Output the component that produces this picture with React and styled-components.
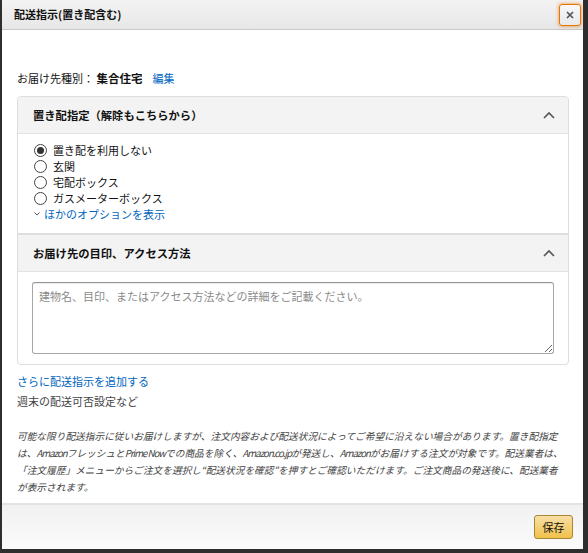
import React, { useState } from 'react';
import styled, { createGlobalStyle } from 'styled-components';

const FONT = `"Noto Sans CJK JP", "Noto Sans", sans-serif`;

const OPTIONS = [
  { id: 'none', label: '置き配を利用しない' },
  { id: 'door', label: '玄関' },
  { id: 'box', label: '宅配ボックス' },
  { id: 'gas', label: 'ガスメーターボックス' },
];

const GlobalStyle = createGlobalStyle`
  html, body {
    margin: 0;
    padding: 0;
    background: #2e2e2e;
  }
  body {
    font-family: ${FONT};
    color: #111;
  }
`;

const CaretUp = () => (
  <svg width="12" height="8" viewBox="0 0 12 8">
    <polyline points="1,7 6,2 11,7" fill="none" stroke="#555" strokeWidth="1.6" />
  </svg>
);

const CaretDown = () => (
  <svg width="6" height="4" viewBox="0 0 6 4">
    <polyline points="0.5,0.5 3,3 5.5,0.5" fill="none" stroke="#555" strokeWidth="1" />
  </svg>
);

const Section = ({ title, children }) => (
  <SectionBlock>
    <SectionHeader>
      <SectionTitle>{title}</SectionTitle>
      <CaretUp />
    </SectionHeader>
    {children}
  </SectionBlock>
);

const App = () => {
  const [choice, setChoice] = useState('none');

  return (
    <>
      <GlobalStyle />
      <Modal>
        <Header>
          <HeaderTitle>配送指示(置き配含む)</HeaderTitle>
          <CloseButton aria-label="閉じる">
            <svg width="8" height="8" viewBox="0 0 8 8">
              <path d="M1 1 L7 7 M7 1 L1 7" stroke="#555" strokeWidth="1.7" />
            </svg>
          </CloseButton>
        </Header>

        <Body>
          <TypeLine>
            お届け先種別： <strong>集合住宅</strong>
            <Link href="#">編集</Link>
          </TypeLine>

          <Box>
            <Section title="置き配指定（解除もこちらから）">
              <RadioList>
                {OPTIONS.map((opt) => (
                  <RadioRow key={opt.id}>
                    <Radio
                      type="radio"
                      name="place"
                      checked={choice === opt.id}
                      onChange={() => setChoice(opt.id)}
                    />
                    {opt.label}
                  </RadioRow>
                ))}
                <MoreRow>
                  <CaretDown />
                  <Link href="#">ほかのオプションを表示</Link>
                </MoreRow>
              </RadioList>
            </Section>

            <Section title="お届け先の目印、アクセス方法">
              <AreaWrap>
                <TextArea placeholder="建物名、目印、またはアクセス方法などの詳細をご記載ください。" />
              </AreaWrap>
            </Section>
          </Box>

          <AddLink href="#">さらに配送指示を追加する</AddLink>
          <SubText>週末の配送可否設定など</SubText>

          <Note>
            可能な限り配送指示に従いお届けしますが、注文内容および配送状況によってご希望に沿えない場合があります。置き配指定
            <br />
            は、<Latin>Amazon</Latin>フレッシュと<Latin>Prime Now</Latin>での商品を除く、
            <Latin>Amazon.co.jp</Latin>が発送し、<Latin>Amazon</Latin>がお届けする注文が対象です。配送業者は、
            <br />
            「注文履歴」メニューからご注文を選択し“配送状況を確認”を押すとご確認いただけます。ご注文商品の発送後に、配送業者
            <br />
            が表示されます。
          </Note>
        </Body>

        <Footer>
          <SaveButton>保存</SaveButton>
        </Footer>
      </Modal>
    </>
  );
};

const Modal = styled.div`
  display: flex;
  flex-direction: column;
  width: 581px;
  height: 549px;
  margin-left: 2px;
  background: #fff;
`;

const Header = styled.div`
  display: flex;
  align-items: center;
  justify-content: space-between;
  height: 29px;
  padding: 0 2px 0 12px;
  background: linear-gradient(#f3f3f3, #e7e7e7);
  border-bottom: 1px solid #c9c9c9;
`;

const HeaderTitle = styled.h1`
  margin: 0;
  font-size: 11px;
  font-weight: 700;
  line-height: 1;
`;

const CloseButton = styled.button`
  display: flex;
  align-items: center;
  justify-content: center;
  width: 22px;
  height: 22px;
  padding: 0;
  margin-top: 1px;
  border: 1px solid #e77600;
  border-radius: 3px;
  background: linear-gradient(#f7f8fa, #e7e9ec);
  box-shadow: 0 0 3px 1px rgba(228, 121, 17, 0.5);
`;

const Body = styled.div`
  flex: 1;
  padding: 39px 14px 0 15px;
`;

const TypeLine = styled.div`
  font-size: 11px;
  line-height: 18px;
  margin-bottom: 9px;

  strong {
    font-weight: 700;
    font-size: 11.5px;
  }
`;

const Link = styled.a`
  color: #0066c0;
  text-decoration: none;
  margin-left: 10px;

  svg + & {
    margin-left: 4px;
  }
`;

const Box = styled.div`
  border: 1px solid #ddd;
  border-radius: 4px;
  overflow: hidden;
`;

const SectionBlock = styled.section`
  & + & {
    border-top: 2px solid #ddd;
  }
`;

const SectionHeader = styled.div`
  display: flex;
  align-items: center;
  justify-content: space-between;
  height: 36px;
  padding: 0 13px 0 15px;
  background: #f3f3f3;
  border-bottom: 1px solid #e3e3e3;
`;

const SectionTitle = styled.h2`
  margin: 0;
  font-size: 11.3px;
  font-weight: 700;
`;

const RadioList = styled.div`
  padding: 8px 16px 11px;
`;

const RadioRow = styled.label`
  display: flex;
  align-items: center;
  gap: 6px;
  height: 16px;
  font-size: 11px;
`;

const Radio = styled.input`
  appearance: none;
  width: 13px;
  height: 13px;
  margin: 0;
  border: 1px solid #444;
  border-radius: 50%;
  background: #fff;
  display: grid;
  place-items: center;

  &:checked::after {
    content: '';
    width: 7px;
    height: 7px;
    border-radius: 50%;
    background: #333;
  }
`;

const MoreRow = styled.div`
  display: flex;
  align-items: center;
  height: 16px;
  font-size: 11px;
`;

const AreaWrap = styled.div`
  padding: 10px 14px;
`;

const TextArea = styled.textarea`
  display: block;
  box-sizing: border-box;
  width: 100%;
  height: 72px;
  padding: 5px 6px;
  border: 1px solid #a6a6a6;
  border-top-color: #949494;
  border-radius: 3px;
  font-family: ${FONT};
  font-size: 11px;
  line-height: 16px;
  box-shadow: 0 1px 0 rgba(0, 0, 0, 0.07) inset;

  &::placeholder {
    color: #8a8a8a;
  }
`;

const AddLink = styled.a`
  display: block;
  margin-top: 6px;
  font-size: 11px;
  line-height: 20px;
  color: #0066c0;
  text-decoration: none;
`;

const SubText = styled.div`
  font-size: 11px;
  line-height: 20px;
  color: #444;
`;

const Note = styled.p`
  margin: 17px 0 0;
  font-size: 9.7px;
  line-height: 17px;
  font-style: italic;
  color: #444;
  white-space: nowrap;
`;

const Latin = styled.span`
  letter-spacing: -1.05px;
`;

const Footer = styled.div`
  display: flex;
  align-items: center;
  justify-content: flex-end;
  height: 44px;
  padding-right: 10px;
  border-top: 2px solid #e3e3e3;
  background: linear-gradient(#f1f1f1, #fbfbfb);
`;

const SaveButton = styled.button`
  width: 39px;
  height: 24px;
  padding: 0;
  border: 1px solid #a88734;
  border-radius: 3px;
  background: linear-gradient(#f7dfa5, #f0c14b);
  font-family: ${FONT};
  font-size: 11px;
  color: #111;
`;

export default App;
